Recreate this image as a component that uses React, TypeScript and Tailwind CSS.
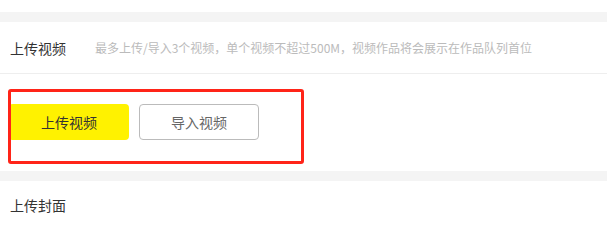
export default function App() {
  return (
    <div
      className="w-[607px] h-[229px] bg-white overflow-hidden"
      style={{ fontFamily: '"Noto Sans CJK SC", "Noto Sans", sans-serif' }}
    >
      <div className="h-[12px] bg-white" />
      <div className="h-[10px] bg-[#f4f4f4]" />
      <div className="h-[52px] flex items-center border-b border-[#eeeeee]">
        <span className="pl-[10px] w-[95px] text-[14px] text-[#333333] leading-none">上传视频</span>
        <span className="text-[12px] text-[#bbbbbb] leading-none">
          最多上传/导入3个视频，单个视频不超过500M，视频作品将会展示在作品队列首位
        </span>
      </div>
      <div className="h-[97px] pt-[15px] pl-[8px]">
        <div className="w-[296px] h-[75px] border-[3px] border-[#ff2418] rounded-[3px] flex items-start pt-[12px] gap-[10px] overflow-hidden">
          <button className="w-[120px] h-[36px] ml-[-2px] bg-[#fff200] rounded-[4px] text-[14px] text-[#333333] flex items-center justify-center">
            上传视频
          </button>
          <button className="w-[120px] h-[36px] border border-[#bbbbbb] rounded-[4px] text-[14px] text-[#666666] flex items-center justify-center">
            导入视频
          </button>
        </div>
      </div>
      <div className="h-[10px] bg-[#f4f4f4]" />
      <div className="h-[48px] flex items-center">
        <span className="pl-[10px] text-[14px] text-[#333333] leading-none">上传封面</span>
      </div>
    </div>
  );
}
